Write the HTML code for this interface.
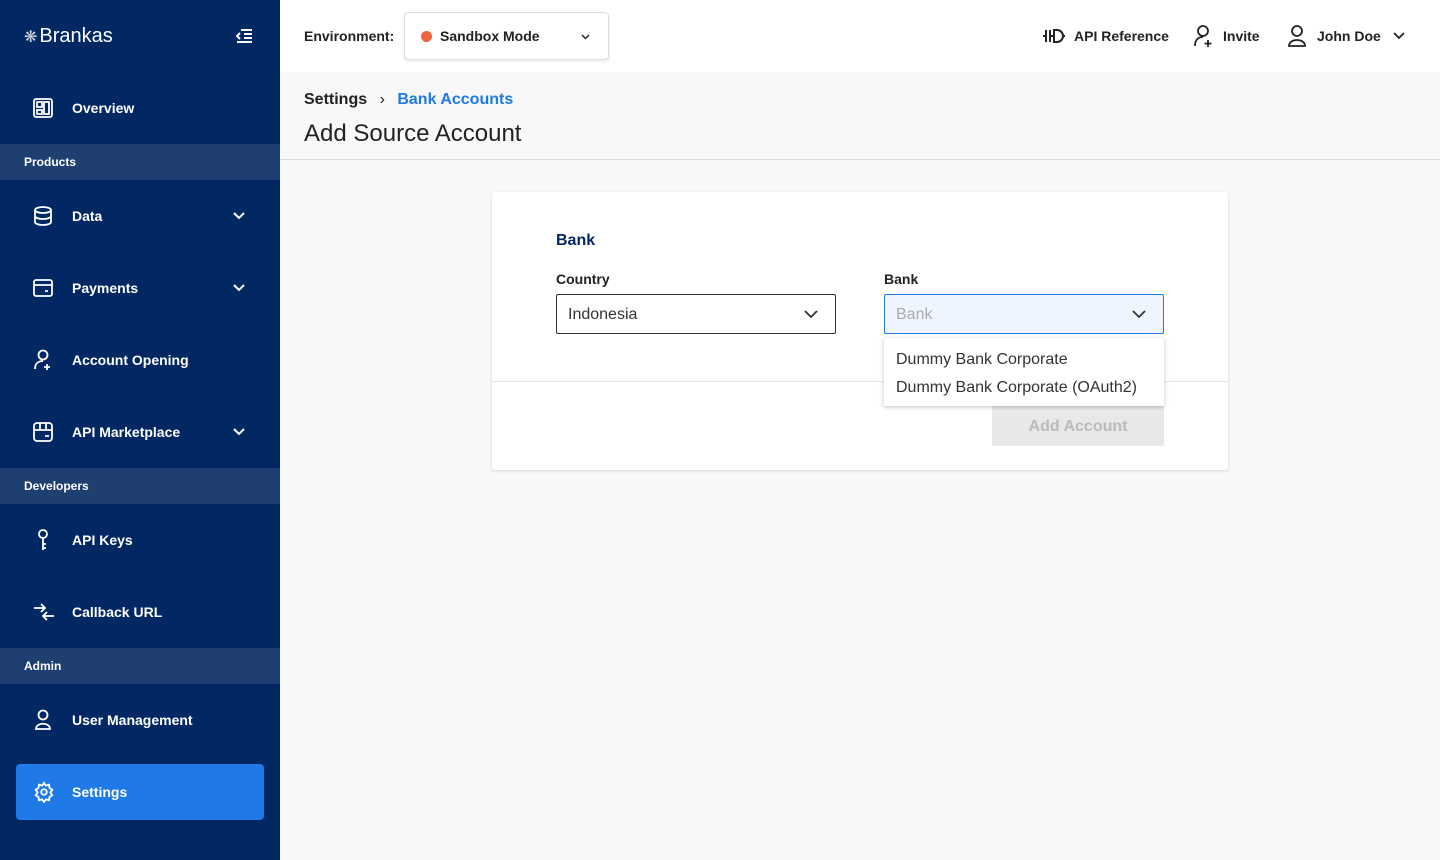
<!DOCTYPE html>
<html><head><meta charset="utf-8"><style>
*{box-sizing:border-box;margin:0;padding:0}
body{width:1440px;height:860px;overflow:hidden;font-family:"Liberation Sans",sans-serif;background:#f8f8f8;position:relative}
.sb{position:absolute;left:0;top:0;width:280px;height:860px;background:#022864;color:#fff}
.logo{position:absolute;left:24px;top:25px;font-size:20px}
.item{position:absolute;left:0;width:280px;height:56px;display:flex;align-items:center;font-size:14px;font-weight:bold}
.item svg{position:absolute;left:33px}
.item span{position:absolute;left:72px}
.sec{position:absolute;left:0;width:280px;height:36px;background:#1f3f70;font-size:12px;font-weight:bold;padding-left:24px;line-height:36px}
.active{left:16px;width:248px;background:#1f7ae8;border-radius:4px}
.active svg{left:17px}.active span{left:56px}
.top{position:absolute;left:280px;top:0;right:0;height:72px;background:#fff}
.hdr{position:absolute;left:280px;top:72px;right:0;height:88px;background:#f8f8f8;border-bottom:1px solid #ddd}
.card{position:absolute;left:492px;top:192px;width:736px;height:278px;background:#fff;box-shadow:0 1px 3px rgba(0,0,0,.15);border-radius:2px}
.sel{position:absolute;height:40px;width:280px;border:1px solid #333;border-radius:2px;font-size:16px;line-height:40px;padding-left:11px;color:#333}
</style></head><body>
<div class="sb">
 <div class="logo"><span style="font-size:16px;opacity:.8;margin-right:2px">❋</span>Brankas</div>
 <svg style="position:absolute;left:236px;top:28px" width="16" height="16" viewBox="0 0 16 16" stroke="#fff" stroke-width="2"><path d="M5 2h11M8 6h8M8 10h8M1 14h15"/><path d="M4 5 1 8 4 11" fill="none"/></svg>
 <div class="item" style="top:80px"><svg width="20" height="20" viewBox="0 0 20 20" fill="none" stroke="#fff" stroke-width="1.8"><rect x="1" y="1" width="18" height="18" rx="2"/><rect x="4" y="4" width="5" height="5"/><rect x="4" y="12" width="5" height="4"/><rect x="11" y="4" width="5" height="12"/></svg><span>Overview</span></div>
 <div class="sec" style="top:144px">Products</div>
 <div class="item" style="top:188px"><svg width="20" height="20" viewBox="0 0 20 20" fill="none" stroke="#fff" stroke-width="1.8"><ellipse cx="10" cy="4" rx="8" ry="3"/><path d="M2 4v12c0 1.7 3.6 3 8 3s8-1.3 8-3V4M2 10c0 1.7 3.6 3 8 3s8-1.3 8-3"/></svg><span>Data</span><svg width="12" height="8" viewBox="0 0 12 8" fill="none" stroke="#fff" stroke-width="2" style="left:233px"><path d="M1 1l5 5 5-5"/></svg></div>
 <div class="item" style="top:260px"><svg width="20" height="18" viewBox="0 0 20 18" fill="none" stroke="#fff" stroke-width="1.8"><rect x="1" y="1" width="18" height="16" rx="2"/><path d="M1 6h18M12 12h3"/></svg><span>Payments</span><svg width="12" height="8" viewBox="0 0 12 8" fill="none" stroke="#fff" stroke-width="2" style="left:233px"><path d="M1 1l5 5 5-5"/></svg></div>
 <div class="item" style="top:332px"><svg width="20" height="22" viewBox="0 0 20 22" fill="none" stroke="#fff" stroke-width="1.8"><circle cx="10" cy="6" r="4.5"/><path d="M2 20c0-5 3-8 8-8M14 15v6M11 18h6"/></svg><span>Account Opening</span></div>
 <div class="item" style="top:404px"><svg width="20" height="20" viewBox="0 0 20 20" fill="none" stroke="#fff" stroke-width="1.8"><rect x="1" y="1" width="18" height="18" rx="3"/><path d="M1 8h18M7 1v7M13 1v7M12 14h4"/></svg><span>API Marketplace</span><svg width="12" height="8" viewBox="0 0 12 8" fill="none" stroke="#fff" stroke-width="2" style="left:233px"><path d="M1 1l5 5 5-5"/></svg></div>
 <div class="sec" style="top:468px">Developers</div>
 <div class="item" style="top:512px"><svg width="20" height="22" viewBox="0 0 20 22" fill="none" stroke="#fff" stroke-width="1.8"><circle cx="10" cy="5" r="4"/><path d="M10 9v12M10 15h3M10 19h3"/></svg><span>API Keys</span></div>
 <div class="item" style="top:584px"><svg width="22" height="20" viewBox="0 0 22 20" fill="none" stroke="#fff" stroke-width="1.8"><path d="M1 6h10M8 2l4 4-4 4M21 14H11M14 10l-4 4 4 4"/></svg><span>Callback URL</span></div>
 <div class="sec" style="top:648px">Admin</div>
 <div class="item" style="top:692px"><svg width="20" height="22" viewBox="0 0 20 22" fill="none" stroke="#fff" stroke-width="1.8"><circle cx="10" cy="6" r="4.5"/><path d="M3 20c0-7 14-7 14 0z"/></svg><span>User Management</span></div>
 <div class="item active" style="top:764px"><svg width="22" height="22" viewBox="0 0 24 24" fill="none" stroke="#fff" stroke-width="2"><circle cx="12" cy="12" r="3"/><path d="M12 2l2 3 3.5-1 .5 3.5 3 2-2 3 2 3-3 2-.5 3.5-3.5-1-2 3-2-3-3.5 1-.5-3.5-3-2 2-3-2-3 3-2L6.5 4 10 5z"/></svg><span>Settings</span></div>
</div>
<div class="top">
 <div style="position:absolute;left:24px;top:28px;font-size:14px;font-weight:bold;color:#222">Environment:</div>
 <div style="position:absolute;left:124px;top:12px;width:205px;height:48px;border:1px solid #ddd;border-radius:4px;box-shadow:0 1px 3px rgba(0,0,0,.1)">
  <div style="position:absolute;left:16px;top:18px;width:11px;height:11px;border-radius:50%;background:#f0643c"></div>
  <div style="position:absolute;left:35px;top:15px;font-size:14px;font-weight:bold;color:#222">Sandbox Mode</div>
  <svg style="position:absolute;left:176px;top:21px" width="9" height="6" viewBox="0 0 9 6" fill="none" stroke="#222" stroke-width="1.5"><path d="M1 1l3.5 3.5L8 1"/></svg>
 </div>
 <svg style="position:absolute;left:763px;top:28px" width="22" height="16" viewBox="0 0 22 16" fill="none" stroke="#222" stroke-width="2"><path d="M0 8h3M3 2v12M7 2v12M7 8h4M11 2h3a6 6 0 010 12h-3zM20 8h2"/></svg>
 <div style="position:absolute;left:794px;top:28px;font-size:14px;font-weight:bold;color:#222">API Reference</div>
 <svg style="position:absolute;left:913px;top:24px" width="20" height="24" viewBox="0 0 20 24" fill="none" stroke="#222" stroke-width="1.8"><circle cx="10" cy="7" r="5"/><path d="M2 22c0-6 3-9 8-9M15 16v7M11.5 19.5h7"/></svg>
 <div style="position:absolute;left:943px;top:28px;font-size:14px;font-weight:bold;color:#222">Invite</div>
 <svg style="position:absolute;left:1007px;top:24px" width="20" height="24" viewBox="0 0 20 24" fill="none" stroke="#222" stroke-width="1.8"><circle cx="10" cy="7" r="5"/><path d="M2 22c0-8 16-8 16 0z"/></svg>
 <div style="position:absolute;left:1037px;top:28px;font-size:14px;font-weight:bold;color:#222">John Doe</div>
 <svg style="position:absolute;left:1113px;top:32px" width="12" height="8" viewBox="0 0 12 8" fill="none" stroke="#222" stroke-width="1.8"><path d="M1 1l5 5 5-5"/></svg>
</div>
<div class="hdr">
 <div style="position:absolute;left:24px;top:19px;font-size:16px;font-weight:bold;color:#222">Settings <span style="font-weight:normal;margin:0 8px">›</span> <span style="color:#1f7ae8">Bank Accounts</span></div>
 <div style="position:absolute;left:24px;top:48px;font-size:24px;color:#222">Add Source Account</div>
</div>
<div class="card">
 <div style="position:absolute;left:64px;top:40px;font-size:16px;font-weight:bold;color:#022864">Bank</div>
 <div style="position:absolute;left:64px;top:79px;font-size:14px;font-weight:bold;color:#222">Country</div>
 <div style="position:absolute;left:392px;top:79px;font-size:14px;font-weight:bold;color:#222">Bank</div>
 <div class="sel" style="left:64px;top:102px">Indonesia<svg style="position:absolute;right:17px;top:15px" width="14" height="9" viewBox="0 0 14 9" fill="none" stroke="#333" stroke-width="1.8"><path d="M1 1l6 6 6-6"/></svg></div>
 <div class="sel" style="left:392px;top:102px;border-color:#1f7ae8;background:#eef5fe;color:#aab">Bank<svg style="position:absolute;right:17px;top:15px" width="14" height="9" viewBox="0 0 14 9" fill="none" stroke="#333" stroke-width="1.8"><path d="M1 1l6 6 6-6"/></svg></div>
 <div style="position:absolute;left:0;right:0;top:189px;border-top:1px solid #e5e5e5"></div>
 <div style="position:absolute;left:500px;top:214px;width:172px;height:40px;background:#e8e8e8;color:#bbb;font-size:16px;font-weight:bold;text-align:center;line-height:42px;border-radius:2px">Add Account</div>
 <div style="position:absolute;left:392px;top:146px;width:280px;height:68px;background:#fff;box-shadow:0 1px 4px rgba(0,0,0,.25);font-size:16px;color:#333;padding:8px 12px;line-height:28px">Dummy Bank Corporate<br>Dummy Bank Corporate (OAuth2)</div>
</div>
</body></html>
